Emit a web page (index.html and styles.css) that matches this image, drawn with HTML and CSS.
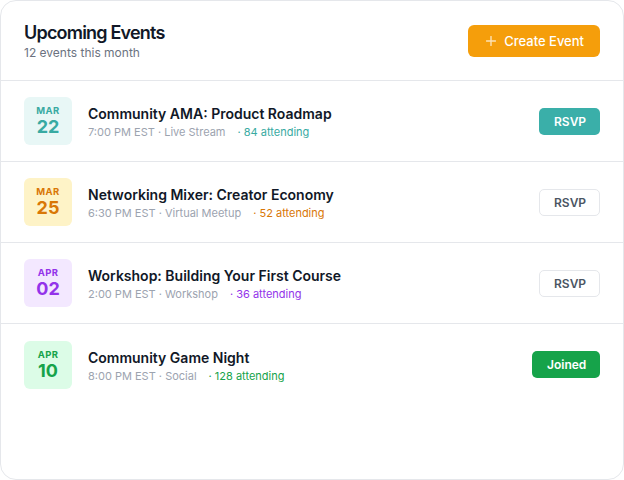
FILE: index.html
```html
<!DOCTYPE html>
<html lang="en">
<head>
<meta charset="utf-8">
<title>Upcoming Events</title>
<link rel="stylesheet" href="styles.css">
</head>
<body>
<div class="card">
  <div class="header">
    <div class="heading">
      <h1 class="title">Upcoming Events</h1>
      <div class="subtitle">12 events this month</div>
    </div>
    <button class="create-btn">
      <svg class="plus" width="10" height="10" viewBox="0 0 10 10"><path d="M5 0.5v9M0.5 5h9" stroke="currentColor" stroke-width="1.4" stroke-linecap="round" fill="none"/></svg>
      <span>Create Event</span>
    </button>
  </div>
  <div class="list">
    <div class="row">
      <div class="date teal"><span class="month">MAR</span><span class="day">22</span></div>
      <div class="info">
        <div class="name">Community AMA: Product Roadmap</div>
        <div class="meta"><span>7:00 PM EST · Live Stream</span><span class="att teal-t">· 84 attending</span></div>
      </div>
      <button class="btn btn-teal">RSVP</button>
    </div>
    <div class="row">
      <div class="date orange"><span class="month">MAR</span><span class="day">25</span></div>
      <div class="info">
        <div class="name">Networking Mixer: Creator Economy</div>
        <div class="meta"><span>6:30 PM EST · Virtual Meetup</span><span class="att orange-t">· 52 attending</span></div>
      </div>
      <button class="btn btn-outline">RSVP</button>
    </div>
    <div class="row">
      <div class="date purple"><span class="month">APR</span><span class="day">02</span></div>
      <div class="info">
        <div class="name">Workshop: Building Your First Course</div>
        <div class="meta"><span>2:00 PM EST · Workshop</span><span class="att purple-t">· 36 attending</span></div>
      </div>
      <button class="btn btn-outline">RSVP</button>
    </div>
    <div class="row last">
      <div class="date green"><span class="month">APR</span><span class="day">10</span></div>
      <div class="info">
        <div class="name">Community Game Night</div>
        <div class="meta"><span>8:00 PM EST · Social</span><span class="att green-t">· 128 attending</span></div>
      </div>
      <button class="btn btn-green">Joined</button>
    </div>
  </div>
</div>
</body>
</html>
```
FILE: styles.css
```css
* { box-sizing: border-box; }
html, body { margin: 0; padding: 0; background: #ffffff; }
body {
  font-family: Inter, "Noto Sans", "Liberation Sans", sans-serif;
  width: 624px;
  height: 480px;
}
.card {
  width: 624px;
  height: 480px;
  border: 1px solid #e5e7eb;
  border-radius: 16px;
  background: #ffffff;
  overflow: hidden;
}
.header {
  display: flex;
  align-items: center;
  justify-content: space-between;
  padding: 19px 23px 19px 23px;
  height: 80px;
  border-bottom: 1px solid #e5e7eb;
}
.title {
  margin: 0;
  font-size: 18px;
  line-height: 24px;
  font-weight: 600;
  color: #111827;
  letter-spacing: -0.8px;
}
.subtitle {
  font-size: 12px;
  line-height: 16px;
  color: #6b7280;
}
.create-btn {
  display: flex;
  align-items: center;
  gap: 8px;
  height: 32px;
  padding: 0 16px 0 18px;
  border: none;
  border-radius: 6px;
  background: #f59e0b;
  color: #ffffff;
  font-family: inherit;
  font-size: 13px;
  font-weight: 500;
}
.plus { color: rgba(255,255,255,0.7); }
.row {
  display: flex;
  align-items: center;
  height: 81px;
  padding: 0 23px;
  border-bottom: 1px solid #e5e7eb;
}
.row.last { border-bottom: none; }
.date {
  width: 48px;
  height: 48px;
  border-radius: 6px;
  display: flex;
  flex-direction: column;
  align-items: center;
  justify-content: center;
  flex-shrink: 0;
}
.month {
  font-size: 9.5px;
  line-height: 12px;
  font-weight: 700;
  letter-spacing: 0.4px;
}
.day {
  font-size: 18px;
  line-height: 20px;
  font-weight: 700;
}
.teal { background: #e8f7f6; color: #38aaa2; }
.orange { background: #fef3c7; color: #d97706; }
.purple { background: #f3e8ff; color: #9333ea; }
.green { background: #dcfce7; color: #16a34a; }
.info {
  flex: 1;
  margin-left: 16px;
  padding-top: 2px;
}
.name {
  font-size: 14px;
  line-height: 20px;
  font-weight: 600;
  color: #111827;
}
.meta {
  display: flex;
  gap: 12px;
  font-size: 11px;
  line-height: 16px;
  color: #9ca3af;
}
.teal-t { color: #38aaa2; }
.orange-t { color: #d97706; }
.purple-t { color: #9333ea; }
.green-t { color: #16a34a; }
.btn {
  height: 27px;
  border-radius: 5px;
  font-family: inherit;
  font-size: 12px;
  font-weight: 600;
  padding: 0 14px;
  border: 1px solid transparent;
}
.btn-teal { background: #3aafa9; color: #ffffff; width: 61px; }
.btn-outline { background: #ffffff; border-color: #e5e7eb; color: #4b5563; width: 61px; }
.btn-green { background: #16a34a; color: #ffffff; width: 68px; }
```
